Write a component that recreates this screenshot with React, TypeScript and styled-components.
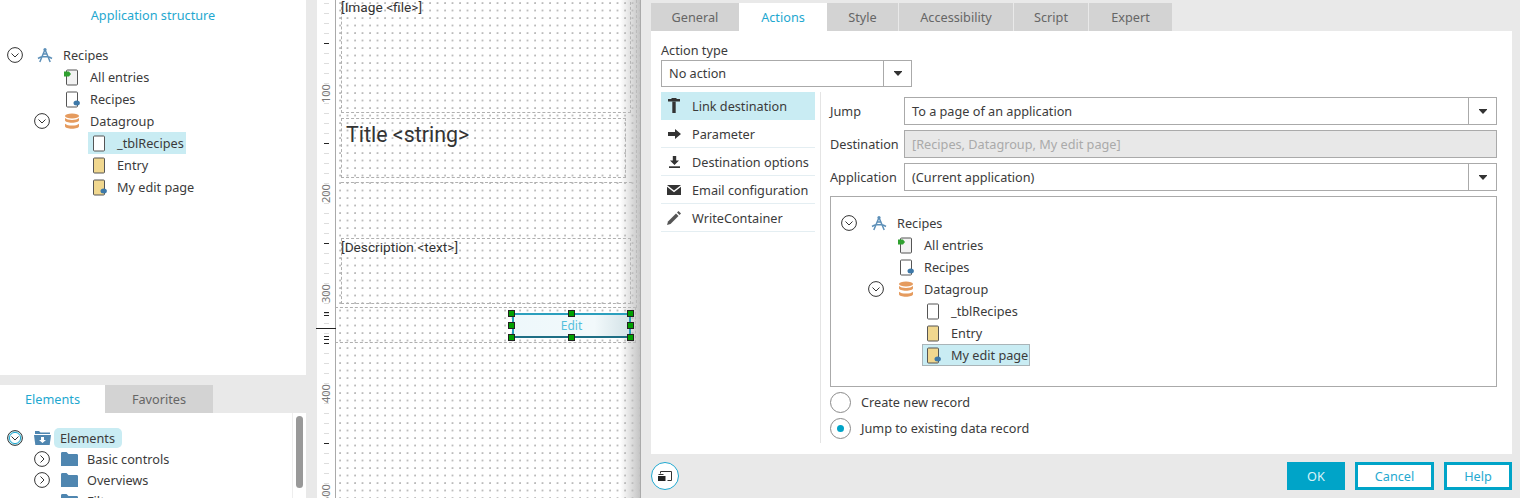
import React from "react";
import styled, { createGlobalStyle } from "styled-components";

const Global = createGlobalStyle`
  html, body { margin: 0; padding: 0; background: #e9e9e9; }
  body { font-family: "Noto Sans", "Open Sans", sans-serif; font-size: 12.7px; color: #3b3b3b; }
  * { box-sizing: border-box; }
`;

const Page = styled.div`
  width: 1520px; height: 498px; display: flex; overflow: hidden; background: #e9e9e9;
`;
const LeftColumn = styled.div`
  width: 306px; height: 498px; display: flex; flex-direction: column; flex: none;
`;
const StructurePanel = styled.section`
  height: 375px; background: #fff; padding-top: 6px; flex: none;
`;
const PanelTitle = styled.div`
  height: 38px; line-height: 18px; text-align: center; color: #1fa8d0;
`;
const LeftTabs = styled.div`
  display: flex; margin-top: 10px; height: 28px; flex: none;
`;
const TabButton = styled.div<{ $w: number; $active?: boolean; $gap?: boolean }>`
  width: ${p => p.$w}px; height: 28px; line-height: 28px; text-align: center;
  background: ${p => (p.$active ? "#fff" : "#d3d3d3")};
  color: ${p => (p.$active ? "#1fa8d0" : "#666")};
  margin-right: ${p => (p.$gap ? 1 : 0)}px;
  flex: none;
`;
const ElementsPanel = styled.section`
  position: relative; flex: 1; background: #fff; overflow: hidden; padding-top: 15px;
`;
const ScrollTrack = styled.div`
  position: absolute; left: 292px; top: 0; bottom: 0; width: 14px; border-left: 1px solid #eee; background: #fff;
`;
const ScrollThumb = styled.div`
  position: absolute; left: 3px; top: 3px; width: 7px; height: 72px; border-radius: 4px; background: #999;
`;
const RulerGap = styled.div`width: 11px; flex: none;`;
const Ruler = styled.div`
  position: relative; width: 19px; height: 498px; background: #fff; border-right: 1px solid #aaa; flex: none;
`;
const RulerNumber = styled.span<{ $top: number }>`
  position: absolute; left: 2px; top: ${p => p.$top}px; width: 14px; height: 26px; line-height: 14px; text-align: center;
  writing-mode: vertical-rl; transform: rotate(180deg); font-size: 11px; color: #777;
`;
const RulerTicks = styled.svg`position: absolute; left: -1px; top: 0;`;
const Canvas = styled.div`
  position: relative; width: 304px; height: 498px; overflow: hidden; flex: none;
  background-color: #fff;
  background-image: radial-gradient(circle at 1px 1px, #ababab 0.6px, transparent 0.9px);
  background-size: 7.5px 7.5px;
  background-position: 3px 2px;
  font-family: Roboto, "Liberation Sans", sans-serif;
`;
const CanvasShade = styled.div`
  position: absolute; right: 0; top: 0; bottom: 0; width: 20px; pointer-events: none;
  background: linear-gradient(to right, rgba(200,200,200,0), rgba(190,190,190,0.9));
`;
const Dashed = styled.div<{ $l: number; $t: number; $w: number; $h: number }>`
  position: absolute; left: ${p => p.$l}px; top: ${p => p.$t}px; width: ${p => p.$w}px; height: ${p => p.$h}px;
  border: 1px dashed #b0b0b0;
`;
const DashedRule = styled.div<{ $l: number; $t: number; $w?: number; $h?: number }>`
  position: absolute; left: ${p => p.$l}px; top: ${p => p.$t}px; width: ${p => p.$w ?? 0}px; height: ${p => p.$h ?? 0}px;
  border-top: ${p => (p.$w ? "1px dashed #b0b0b0" : "none")};
  border-left: ${p => (p.$h ? "1px dashed #b0b0b0" : "none")};
`;
const CanvasLabel = styled.span<{ $l: number; $t: number }>`
  position: absolute; left: ${p => p.$l}px; top: ${p => p.$t}px; font-size: 13.7px; line-height: 15px; color: #333; white-space: nowrap;
`;
const CanvasTitle = styled.span`
  position: absolute; left: 10px; top: 122px; font-size: 21.4px; line-height: 26px; color: #333; white-space: nowrap;
`;
const EditButton = styled.div`
  position: absolute; left: 176px; top: 313px; width: 119px; height: 25px;
  border: 2px solid #2b9fbd; border-bottom-color: #1f6f85;
  background: linear-gradient(to right, #eef8fb, #f2f9fb 70%, #d3e2e7);
  color: #55bfdc; text-align: center; line-height: 21px; font-size: 12px;
  font-family: "Noto Sans", sans-serif;
`;
const Handle = styled.i<{ $x: number; $y: number }>`
  position: absolute; left: ${p => p.$x}px; top: ${p => p.$y}px; width: 7px; height: 7px;
  background: #00a000; border: 1px solid #222;
`;
const Marker = styled.div`
  position: absolute; left: -1px; top: 328px; width: 20px; height: 1px; background: #222;
`;

const Dialog = styled.div`
  width: 880px; height: 498px; border-left: 1px solid #aaa; display: flex; flex-direction: column; flex: none; background: #e9e9e9;
`;
const DialogTabs = styled.div`
  height: 31px; padding: 3px 0 0 10px; display: flex; flex: none;
`;
const DialogBody = styled.div`
  margin: 0 8px 0 10px; height: 423px; background: #fff; padding: 10px 15px 0 10px; flex: none;
`;
const FieldCaption = styled.div`height: 19px; line-height: 19px; color: #3b3b3b;`;
const Select = styled.div<{ $w?: number; $disabled?: boolean; $short?: boolean }>`
  height: ${p => (p.$short ? 27 : 28)}px; line-height: ${p => (p.$short ? 25 : 27)}px; display: flex; border: 1px solid #aaa;
  width: ${p => (p.$w ? `${p.$w}px` : "auto")};
  background: ${p => (p.$disabled ? "#e8e8e8" : "#fff")};
  color: ${p => (p.$disabled ? "#aaa" : "#3b3b3b")};
`;
const SelectValue = styled.div`flex: 1; padding-left: 7px; white-space: nowrap;`;
const Caret = styled.div`
  width: 28px; border-left: 1px solid #aaa; display: flex; align-items: center; justify-content: center; flex: none;
`;
const Split = styled.div`display: flex; margin-top: 5px; height: 351px;`;
const LinkList = styled.nav`width: 154px; flex: none;`;
const LinkRow = styled.div<{ $active?: boolean }>`
  height: 28px; display: flex; align-items: center; white-space: nowrap;
  background: ${p => (p.$active ? "#c9ecf3" : "transparent")};
  border-bottom: 1px solid ${p => (p.$active ? "#c9ecf3" : "#e4eef2")};
`;
const LinkIcon = styled.span`
  width: 26px; display: flex; justify-content: center; margin-right: 5px; flex: none;
`;
const DetailPane = styled.div`
  margin-left: 5px; width: 677px; border-left: 1px solid #e4e4e4; padding: 5px 0 0 9px;
`;
const FormGrid = styled.div`
  display: grid; grid-template-columns: 74px 593px; row-gap: 5px; align-items: center;
`;
const TreeBox = styled.div`
  margin-top: 5px; width: 667px; height: 191px; border: 1px solid #aaa; padding: 15px 0 0 3px;
`;
const Radios = styled.div`display: flex; flex-direction: column; gap: 5px; margin-top: 5px;`;
const RadioRow = styled.label`display: flex; align-items: center; height: 21px; gap: 10px;`;
const RadioText = styled.span`margin-top: -2px;`;
const RadioDot = styled.span<{ $on?: boolean }>`
  width: 21px; height: 21px; border-radius: 50%; border: 1px solid #8a8a8a; background: #fff;
  display: flex; align-items: center; justify-content: center; flex: none;
  &::after { content: ""; width: 7px; height: 7px; border-radius: 50%; background: ${p => (p.$on ? "#00a4c8" : "transparent")}; }
`;
const Footer = styled.div`
  flex: 1; display: flex; align-items: center; padding: 0 8px 0 10px; gap: 10px;
`;
const RoundButton = styled.div`
  width: 28px; height: 28px; border-radius: 50%; border: 1px solid #1fa8d0; background: #fff;
  display: flex; align-items: center; justify-content: center; margin-right: auto;
`;
const ActionButton = styled.div<{ $w: number; $primary?: boolean }>`
  width: ${p => p.$w}px; height: 28px; line-height: 22px; text-align: center; border: 3px solid #00a4c8;
  background: ${p => (p.$primary ? "#00a4c8" : "#fff")};
  color: ${p => (p.$primary ? "#d9f3f8" : "#26a9d0")};
`;

const TreeRowBox = styled.div<{ $depth: number; $h: number }>`
  height: ${p => p.$h}px; display: flex; align-items: center; padding-left: ${p => 7 + p.$depth * 27}px; white-space: nowrap;
`;
const ToggleSlot = styled.span`width: 16px; height: 16px; flex: none; display: flex;`;
const TreeItem = styled.div<{ $sel?: boolean; $boxed?: boolean; $compact?: boolean }>`
  display: flex; align-items: center; margin-left: ${p => (p.$compact ? 8 : 11)}px; padding-left: 1px; padding-right: ${p => (p.$sel ? 2 : 0)}px;
  height: 22px;
  background: ${p => (p.$sel ? "#c9ecf3" : "transparent")};
  box-shadow: ${p => (p.$boxed ? "inset 0 0 0 1px #a9b4b8" : "none")};
`;
const IconSlot = styled.span<{ $tight?: boolean }>`
  width: 20px; display: flex; justify-content: center; margin-right: ${p => (p.$tight ? 2 : 8)}px; flex: none;
`;
const Pill = styled.span`
  height: 20px; line-height: 20px; padding: 0 7px 0 6px; border-radius: 5px; background: #c9ecf3;
`;

const Toggle = ({ open, ring }: { open?: boolean; ring?: boolean }) => (
  <svg width="16" height="16" viewBox="0 0 16 16">
    <circle cx="8" cy="8" r="7.4" fill={ring ? "#c9ecf3" : "#fff"} stroke="#333" strokeWidth="1" />
    {ring && <circle cx="8" cy="8" r="5.6" fill="#fff" stroke="#1fa8d0" strokeWidth="1" />}
    <path d={open ? "M4.5 6.500 8 10l3.500-3.500" : "M6.500 4.500 10 8l-3.500 3.500"} fill="none" stroke="#333" strokeWidth="1" />
  </svg>
);
const AppIcon = () => (
  <svg width="16" height="16" viewBox="0 0 16 16" fill="none" stroke="#5c8fb8" strokeWidth="1.5">
    <path d="M8 2.500 2.800 15M8 2.500 13.200 15M1 11.500c2-1.300 3.500-1.700 4-1.700h6c.5 0 2 .4 4 1.700M5.500 7h5" />
    <circle cx="8" cy="2.500" r="1.600" fill="#5c8fb8" stroke="none" />
  </svg>
);
const DbIcon = () => (
  <svg width="16" height="17" viewBox="0 0 16 17" fill="#e59b5e">
    <ellipse cx="8" cy="3" rx="7" ry="2.600" />
    <path d="M1 5v2.200c0 1.400 3.100 2.500 7 2.500s7-1.100 7-2.500V5c-1.300 1.200-4 1.900-7 1.900S2.300 6.200 1 5z" />
    <path d="M1 10.700v2.600c0 1.400 3.100 2.500 7 2.500s7-1.100 7-2.500v-2.600c-1.300 1.200-4 1.900-7 1.900s-5.700-.7-7-1.900z" />
  </svg>
);
const PageIcon = ({ fill = "#fff", dot, flag }: { fill?: string; dot?: boolean; flag?: boolean }) => (
  <svg width="16" height="17" viewBox="0 0 16 17">
    <rect x="2.500" y="1" width="11" height="15" rx="1" fill={fill} stroke="#555" />
    {dot && <ellipse cx="12.700" cy="12" rx="3.200" ry="2.500" fill="#3d78a8" />}
    {flag && <path d="M0 2.500h5l2 2.500-2 2.500H0z" fill="#2fa02f" />}
  </svg>
);
const FolderIcon = () => (
  <svg width="17" height="14" viewBox="0 0 17 14" fill="#4f86b0">
    <path d="M0 1.500C0 .7.500 0 1.300 0h4.200l2 2h8.200c.7 0 1.300.6 1.300 1.300V14H0z" />
  </svg>
);
const OpenFolderIcon = () => (
  <svg width="17" height="14" viewBox="0 0 17 14" fill="#4f86b0">
    <path d="M1 0h4l1.500 1.500H16V3H1z" />
    <path d="M0 4h17l-1.300 10H1.300z" />
    <path d="M7 6h3v3h2l-3.500 3L5 9h2z" fill="#fff" />
  </svg>
);
const CaretIcon = () => (
  <svg width="8" height="5" viewBox="0 0 8 5"><path d="M0 0h8v.8L4 5 0 .8z" fill="#333" /></svg>
);
const HammerIcon = () => (
  <svg width="12" height="15" viewBox="0 0 12 15" fill="#333">
    <path d="M0 1h3.500V0h5v1H12v2.500H0z" /><path d="M4.300 3.500h3.400V15H4.300z" />
  </svg>
);
const ArrowIcon = () => (
  <svg width="13" height="10" viewBox="0 0 13 10" fill="#333"><path d="M0 3h7V0l6 5-6 5V7H0z" /></svg>
);
const DownloadIcon = () => (
  <svg width="11" height="12" viewBox="0 0 11 12" fill="#333"><path d="M3.800 0h3.400v4.500H10L5.500 9 1 4.500h2.800z" /><path d="M0 10.300h11V12H0z" /></svg>
);
const MailIcon = () => (
  <svg width="14" height="10" viewBox="0 0 14 10" fill="#333"><path d="M0 0h14L7 5.500z" /><path d="M0 1.800V10h14V1.800L7 7.200z" /></svg>
);
const PencilIcon = () => (
  <svg width="14" height="14" viewBox="0 0 14 14" fill="#555"><path d="M0 14l1-3.500 8-8 2.500 2.500-8 8z" /><path d="M10 1.500 11.500 0 14 2.500 12.500 4z" /></svg>
);
const WindowIcon = () => (
  <svg width="14" height="10" viewBox="0 0 14 10" fill="none" stroke="#333">
    <path d="M2.500 2.500V.5h11v9H9.500M.5 3.500h5" /><rect x="0" y="5" width="7.500" height="5" fill="#222" stroke="none" />
  </svg>
);

type Node = { depth: number; label: string; icon: React.ReactNode; toggle?: boolean };
const structure: Node[] = [
  { depth: 0, label: "Recipes", icon: <AppIcon />, toggle: true },
  { depth: 1, label: "All entries", icon: <PageIcon fill="#f2f2f2" flag /> },
  { depth: 1, label: "Recipes", icon: <PageIcon dot /> },
  { depth: 1, label: "Datagroup", icon: <DbIcon />, toggle: true },
  { depth: 2, label: "_tblRecipes", icon: <PageIcon /> },
  { depth: 2, label: "Entry", icon: <PageIcon fill="#f0d78f" /> },
  { depth: 2, label: "My edit page", icon: <PageIcon fill="#f0d78f" dot /> },
];

const Tree = ({ selected, boxed }: { selected: string; boxed?: boolean }) => (
  <>
    {structure.map(n => (
      <TreeRowBox key={n.depth + n.label} $depth={n.depth} $h={22}>
        <ToggleSlot>{n.toggle && <Toggle open />}</ToggleSlot>
        <TreeItem $sel={n.label === selected} $boxed={boxed && n.label === selected}>
          <IconSlot>{n.icon}</IconSlot>
          {n.label}
        </TreeItem>
      </TreeRowBox>
    ))}
  </>
);

const ticks = Array.from({ length: 50 }, (_, i) => 3 + i * 10);
const extraTicks = [312, 315, 336, 339, 343];
const links: [string, React.ReactNode][] = [
  ["Link destination", <HammerIcon />],
  ["Parameter", <ArrowIcon />],
  ["Destination options", <DownloadIcon />],
  ["Email configuration", <MailIcon />],
  ["WriteContainer", <PencilIcon />],
];
const dialogTabs: [string, number, boolean][] = [
  ["General", 88, false], ["Actions", 88, false], ["Style", 71, true],
  ["Accessibility", 114, true], ["Script", 74, true], ["Expert", 83, false],
];
const handles = [[0, 0], [60, 0], [119, 0], [0, 12], [119, 12], [0, 24], [60, 24], [119, 24]];

export default function App() {
  return (
    <Page>
      <Global />
      <LeftColumn>
        <StructurePanel>
          <PanelTitle>Application structure</PanelTitle>
          <Tree selected="_tblRecipes" />
        </StructurePanel>
        <LeftTabs>
          <TabButton $w={105} $active>Elements</TabButton>
          <TabButton $w={108}>Favorites</TabButton>
        </LeftTabs>
        <ElementsPanel>
          <TreeRowBox $depth={0} $h={20}>
            <ToggleSlot><Toggle open ring /></ToggleSlot>
            <TreeItem $compact>
              <IconSlot $tight><OpenFolderIcon /></IconSlot>
              <Pill>Elements</Pill>
            </TreeItem>
          </TreeRowBox>
          <TreeRowBox $depth={1} $h={21}>
            <ToggleSlot><Toggle /></ToggleSlot>
            <TreeItem $compact><IconSlot><FolderIcon /></IconSlot>Basic controls</TreeItem>
          </TreeRowBox>
          <TreeRowBox $depth={1} $h={21}>
            <ToggleSlot><Toggle /></ToggleSlot>
            <TreeItem $compact><IconSlot><FolderIcon /></IconSlot>Overviews</TreeItem>
          </TreeRowBox>
          <TreeRowBox $depth={1} $h={21}>
            <ToggleSlot />
            <TreeItem $compact><IconSlot><FolderIcon /></IconSlot>Filter</TreeItem>
          </TreeRowBox>
          <ScrollTrack><ScrollThumb /></ScrollTrack>
        </ElementsPanel>
      </LeftColumn>
      <RulerGap />
      <Ruler>
        <RulerTicks width="19" height="498">
          {ticks.map(y => (
            <rect key={y} x="8" y={y} width="5" height="1" fill={(y - 43) % 100 === 0 ? "#222" : "#ddd"} />
          ))}
          {extraTicks.map(y => <rect key={y} x="8" y={y} width="5" height="1" fill="#222" />)}
        </RulerTicks>
        {[100, 200, 300, 400, 500].map(n => (
          <RulerNumber key={n} $top={n - 21 + 2}>{n}</RulerNumber>
        ))}
        <Marker />
      </Ruler>
      <Canvas>
        <Dashed $l={5} $t={-3} $w={290} $h={116} />
        <Dashed $l={5} $t={118} $w={285} $h={60} />
        <DashedRule $l={5} $t={182} $w={291} />
        <Dashed $l={5} $t={238} $w={290} $h={66} />
        <Dashed $l={-1} $t={307} $w={301} $h={36} />
        <DashedRule $l={300} $t={0} $h={308} />
        <CanvasLabel $l={5} $t={0}>[Image &lt;file&gt;]</CanvasLabel>
        <CanvasTitle>Title &lt;string&gt;</CanvasTitle>
        <CanvasLabel $l={5} $t={240}>[Description &lt;text&gt;]</CanvasLabel>
        <CanvasShade />
        <EditButton>Edit</EditButton>
        {handles.map(([x, y]) => <Handle key={`${x}-${y}`} $x={172 + x} $y={310 + y} />)}
      </Canvas>
      <Dialog>
        <DialogTabs>
          {dialogTabs.map(([t, w, gap]) => <TabButton key={t} $w={w} $gap={gap} $active={t === "Actions"}>{t}</TabButton>)}
        </DialogTabs>
        <DialogBody>
          <FieldCaption>Action type</FieldCaption>
          <Select $w={251} $short>
            <SelectValue>No action</SelectValue>
            <Caret><CaretIcon /></Caret>
          </Select>
          <Split>
            <LinkList>
              {links.map(([t, ic], i) => (
                <LinkRow key={t} $active={i === 0}><LinkIcon>{ic}</LinkIcon>{t}</LinkRow>
              ))}
            </LinkList>
            <DetailPane>
              <FormGrid>
                <span>Jump</span>
                <Select><SelectValue>To a page of an application</SelectValue><Caret><CaretIcon /></Caret></Select>
                <span>Destination</span>
                <Select $disabled><SelectValue>[Recipes, Datagroup, My edit page]</SelectValue></Select>
                <span>Application</span>
                <Select><SelectValue>(Current application)</SelectValue><Caret><CaretIcon /></Caret></Select>
              </FormGrid>
              <TreeBox><Tree selected="My edit page" boxed /></TreeBox>
              <Radios>
                <RadioRow><RadioDot /><RadioText>Create new record</RadioText></RadioRow>
                <RadioRow><RadioDot $on /><RadioText>Jump to existing data record</RadioText></RadioRow>
              </Radios>
            </DetailPane>
          </Split>
        </DialogBody>
        <Footer>
          <RoundButton><WindowIcon /></RoundButton>
          <ActionButton $w={58} $primary>OK</ActionButton>
          <ActionButton $w={79}>Cancel</ActionButton>
          <ActionButton $w={68}>Help</ActionButton>
        </Footer>
      </Dialog>
    </Page>
  );
}
